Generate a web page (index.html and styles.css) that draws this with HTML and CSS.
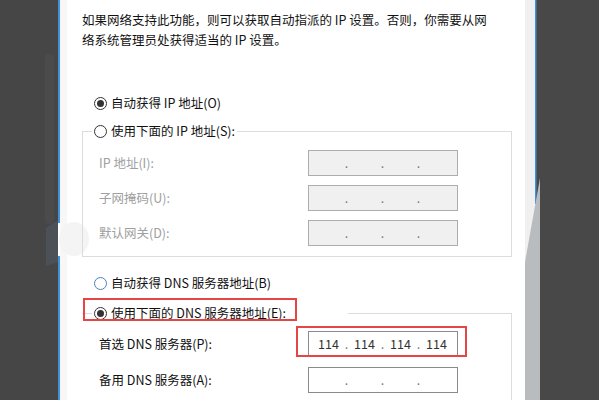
FILE: index.html
```html
<!DOCTYPE html>
<html>

<head>
    <title>Internet 协议版本 4 (TCP/IPv4) 属性</title>
    <link rel="stylesheet" href="styles.css">
</head>

<body>
    <div class="screen">
        <div class="side side-left">
            <svg width="67" height="400" viewBox="0 0 67 400">
                <rect width="58" height="400" fill="#464646" />
                <rect x="45" y="54" width="9" height="170" rx="4" fill="#4b4b4b" />
                <polygon points="46,228 58,220 58,262 46,266" fill="#4b5157" />
                <rect x="58" y="0" width="2" height="223" fill="#3f92d8" />
                <rect x="58" y="256" width="2" height="144" fill="#3f92d8" />
                <rect x="60" y="0" width="7" height="400" fill="#f7f7f7" />
                <ellipse cx="74" cy="239" rx="15" ry="17" fill="#f4f4f4" />
            </svg>
        </div>

        <div class="dialog">
            <p class="intro">如果网络支持此功能，则可以获取自动指派的 IP 设置。否则，你需要从网<br>络系统管理员处获得适当的 IP 设置。</p>

            <label class="radio outer first"><span class="dot on"></span>自动获得 IP 地址(O)</label>
            <fieldset class="group">
                <legend><label class="radio"><span class="dot"></span>使用下面的 IP 地址(S):</label></legend>
                <div class="row off">
                    <span class="lbl">IP 地址(I):</span>
                    <div class="ip"><span class="seg"></span><span class="sep">.</span><span class="seg"></span><span class="sep">.</span><span class="seg"></span><span class="sep">.</span><span class="seg"></span></div>
                </div>
                <div class="row off">
                    <span class="lbl">子网掩码(U):</span>
                    <div class="ip"><span class="seg"></span><span class="sep">.</span><span class="seg"></span><span class="sep">.</span><span class="seg"></span><span class="sep">.</span><span class="seg"></span></div>
                </div>
                <div class="row off">
                    <span class="lbl">默认网关(D):</span>
                    <div class="ip"><span class="seg"></span><span class="sep">.</span><span class="seg"></span><span class="sep">.</span><span class="seg"></span><span class="sep">.</span><span class="seg"></span></div>
                </div>
            </fieldset>

            <label class="radio outer second"><span class="dot blue"></span>自动获得 DNS 服务器地址(B)</label>
            <fieldset class="group dns">
                <legend><label class="radio"><span class="dot on"></span>使用下面的 DNS 服务器地址(E):</label><span class="annot annot-legend"></span></legend>
                <div class="row">
                    <span class="lbl">首选 DNS 服务器(P):</span>
                    <div class="ip on"><span class="seg">114</span><span class="sep">.</span><span class="seg">114</span><span class="sep">.</span><span class="seg">114</span><span class="sep">.</span><span class="seg">114</span><span class="annot annot-input"></span></div>
                </div>
                <div class="row">
                    <span class="lbl">备用 DNS 服务器(A):</span>
                    <div class="ip on"><span class="seg"></span><span class="sep">.</span><span class="seg"></span><span class="sep">.</span><span class="seg"></span><span class="sep">.</span><span class="seg"></span></div>
                </div>
            </fieldset>
        </div>

        <div class="side side-right">
            <svg width="74" height="400" viewBox="0 0 74 400">
                <rect width="11" height="400" fill="#f0f0f0" />
                <rect x="11" width="63" height="400" fill="#484848" />
                <rect x="10" width="1.5" height="204" fill="#3f92d8" />
                <polygon points="15,178 15,400 0,400 0,262" fill="#b8bcbf" />
            </svg>
        </div>
    </div>
</body>

</html>
```

FILE: styles.css
```css
body {
    margin: 0;
    font-family: "Noto Sans CJK SC", "Noto Sans", sans-serif;
    font-size: 12.5px;
}

.screen {
    display: flex;
    width: 599px;
    height: 400px;
    overflow: hidden;
    background-color: #fff;
}

.side {
    flex: none;
}

.side svg {
    display: block;
    overflow: visible;
}

.side-left {
    width: 67px;
}

.side-right {
    width: 74px;
}

.dialog {
    position: relative;
    width: 458px;
    flex: none;
    padding-left: 15px;
    box-sizing: border-box;
    color: #111;
    line-height: 20px;
}

.intro {
    margin: 10px 0 0;
}

.radio {
    display: flex;
    align-items: center;
    gap: 4px;
    height: 20px;
    white-space: nowrap;
}

.dot {
    width: 13px;
    height: 13px;
    flex: none;
    border: 1px solid #333;
    border-radius: 50%;
    box-sizing: border-box;
    display: flex;
    align-items: center;
    justify-content: center;
    background-color: #fff;
}

.dot.on::after {
    content: "";
    width: 7px;
    height: 7px;
    border-radius: 50%;
    background-color: #333;
}

.dot.blue {
    border-color: #4d83b5;
}

.outer {
    margin-left: 12px;
}

.outer.first {
    margin-top: 43px;
}

.outer.second {
    margin-top: 16px;
}

.group {
    width: 430px;
    box-sizing: border-box;
    margin: 8px 0 0;
    padding: 9px 0 10px;
    border: 1px solid #dcdcdc;
    min-width: 0;
}

.group.dns {
    margin-top: 10px;
    padding-top: 8px;
    border-left-color: transparent;
}

legend {
    position: relative;
    margin-left: 9px;
    padding: 0 2px;
}

.dns legend {
    width: 256px;
    box-sizing: border-box;
}

.row {
    display: flex;
    align-items: center;
    height: 26px;
    padding-left: 16px;
}

.row + .row {
    margin-top: 9px;
}

.dns .row + .row {
    margin-top: 10px;
}

.lbl {
    width: 209px;
    flex: none;
}

.off .lbl {
    color: #a0a0a0;
}

.ip {
    position: relative;
    display: flex;
    width: 150px;
    height: 26px;
    padding-left: 5px;
    box-sizing: border-box;
    border: 1px solid #adadad;
    background-color: #f0f0f0;
    line-height: 23px;
    color: #333;
}

.ip.on {
    border-color: #8a8a8a;
    background-color: #fff;
}

.seg {
    width: 29px;
    text-align: center;
}

.sep {
    width: 7px;
    text-align: center;
    color: #7a7a7a;
}

.annot {
    position: absolute;
    box-sizing: border-box;
    border: 2px solid #e64545;
}

.annot-legend {
    left: -9px;
    top: -5px;
    width: 214px;
    height: 23px;
}

.annot-input {
    left: -13px;
    top: -6px;
    width: 171px;
    height: 31px;
}
```
